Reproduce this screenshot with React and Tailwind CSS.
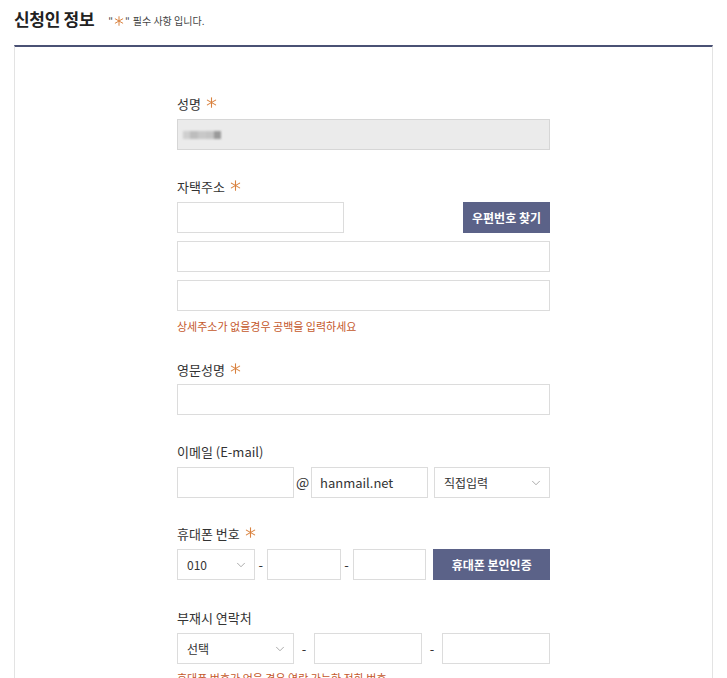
import React from "react";
import { ChevronDown } from "lucide-react";

const font = { fontFamily: '"Noto Sans CJK KR", "Noto Sans", sans-serif' };

const Star = ({ size = 11, className = "ml-[5px] -mt-[2px]" }) => (
  <svg width={size} height={size} viewBox="0 0 12 12" className={"inline-block " + className}>
    <g stroke="#d9823f" strokeWidth="1.2" strokeLinecap="round">
      <line x1="6" y1="0.8" x2="6" y2="11.2" />
      <line x1="1.5" y1="3.4" x2="10.5" y2="8.6" />
      <line x1="1.5" y1="8.6" x2="10.5" y2="3.4" />
    </g>
  </svg>
);

const Label = ({ children, req, className = "" }) => (
  <div className={"h-[19px] leading-[19px] text-[13px] text-[#333] flex items-center " + className}>
    {children}
    {req && <Star />}
  </div>
);

const Input = ({ className = "", bg = "bg-white border-[#dcdcdc]", children }) => (
  <div className={"h-[31px] border flex items-center " + bg + " " + className}>{children}</div>
);

const Select = ({ value, className = "" }) => (
  <div className={"h-[31px] border border-[#dcdcdc] bg-white flex items-center justify-between pl-[9px] pr-[6px] text-[12px] text-[#333] " + className}>
    <span>{value}</span>
    <ChevronDown size={14} strokeWidth={1.2} className="text-[#888]" />
  </div>
);

const Button = ({ children, className = "" }) => (
  <div className={"h-[31px] bg-[#5b6288] text-white text-[12px] font-bold flex items-center justify-center " + className}>
    {children}
  </div>
);

const Help = ({ children, className = "" }) => (
  <div className={"text-[11px] leading-[16px] text-[#c4582b] " + className}>{children}</div>
);

const Dash = ({ className = "" }) => (
  <span className={"text-[13px] text-[#333] " + className}>-</span>
);

export default function App() {
  return (
    <div className="w-[727px] h-[678px] overflow-hidden bg-white" style={font}>
      <div className="flex items-end pl-[14px] h-[45px] pb-[14px]">
        <h2 className="text-[17px] leading-[24px] font-bold text-[#222] tracking-[-0.3px]">신청인 정보</h2>
        <p className="ml-[14px] text-[10px] leading-[16px] text-[#444] mb-[2px] flex items-center">
          "<Star size={10} className="mx-[1px]" />" <span className="ml-[3px]">필수 사항 입니다.</span>
        </p>
      </div>

      <div className="mx-[14px] h-[640px] border-t-2 border-[#4a5174] border-x border-x-[#e3e3e3]">
        <div className="ml-[162px] w-[373px] pt-[47px]">
          <Label req>성명</Label>
          <Input className="mt-[6px] pl-[5px]" bg="bg-[#ebebeb] border-[#d6d6d6]">
            <div className="flex blur-[1.2px]">
              <div className="w-[7px] h-[8px] bg-[#cfcfcf]" />
              <div className="w-[8px] h-[8px] bg-[#bdbdbd]" />
              <div className="w-[8px] h-[8px] bg-[#c8c8c8]" />
              <div className="w-[8px] h-[8px] bg-[#c4c4c4]" />
              <div className="w-[7px] h-[8px] bg-[#9a9a9a]" />
            </div>
          </Input>

          <Label req className="mt-[27px]">자택주소</Label>
          <div className="mt-[6px] flex justify-between">
            <Input className="w-[167px]" />
            <Button className="w-[87px]">우편번호 찾기</Button>
          </div>
          <Input className="mt-[8px]" />
          <Input className="mt-[8px]" />
          <Help className="mt-[7px]">상세주소가 없을경우 공백을 입력하세요</Help>

          <Label req className="mt-[26px]">영문성명</Label>
          <Input className="mt-[5px]" />

          <Label className="mt-[27px]">이메일 (E-mail)</Label>
          <div className="mt-[6px] flex items-center">
            <Input className="w-[117px]" />
            <span className="w-[17px] text-center text-[14px] text-[#333]">@</span>
            <Input className="w-[117px] pl-[8px] text-[13px] text-[#333]">hanmail.net</Input>
            <Select value="직접입력" className="ml-[6px] w-[116px]" />
          </div>

          <Label req className="mt-[26px]">휴대폰 번호</Label>
          <div className="mt-[6px] flex items-center">
            <Select value="010" className="w-[78px]" />
            <Dash className="w-[12px] text-center" />
            <Input className="w-[74px]" />
            <Dash className="w-[12px] text-center" />
            <Input className="w-[74px]" />
            <Button className="ml-[7px] w-[117px]">휴대폰 본인인증</Button>
          </div>

          <Label className="mt-[28px]">부재시 연락처</Label>
          <div className="mt-[6px] flex items-center">
            <Select value="선택" className="w-[117px]" />
            <Dash className="w-[20px] text-center" />
            <Input className="w-[108px]" />
            <Dash className="w-[20px] text-center" />
            <Input className="w-[108px]" />
          </div>
          <Help className="mt-[6px]">휴대폰 번호가 없을 경우 연락 가능한 전화 번호</Help>
        </div>
      </div>
    </div>
  );
}
